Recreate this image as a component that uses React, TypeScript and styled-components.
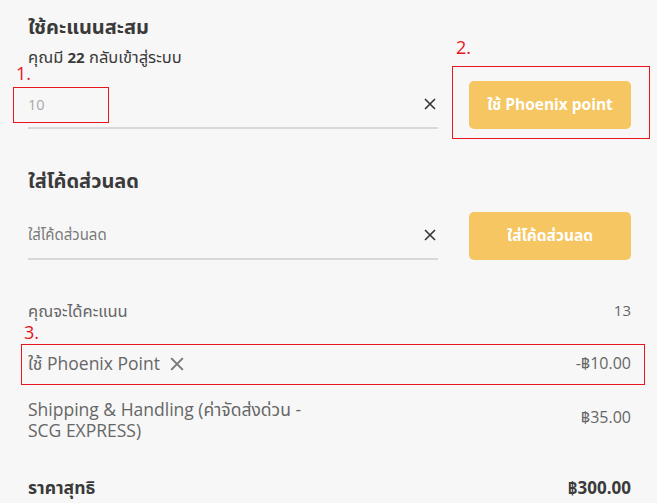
import React from 'react';
import styled, { createGlobalStyle } from 'styled-components';

const GlobalStyle = createGlobalStyle`
    html, body {
        margin: 0;
        padding: 0;
        background: #f7f7f7;
    }
    body {
        font-family: 'Open Sans', 'Noto Sans Thai', 'Noto Sans', 'DejaVu Sans', sans-serif;
        color: #555;
    }
`;

const colors = {
    title: '#3a3a3a',
    body: '#666666',
    muted: '#7a7a7a',
    placeholder: '#a8a8a8',
    line: '#d8d8d8',
    button: '#f5c662',
    mark: '#e8141e',
};

const Page = styled.div`
    position: relative;
    width: 657px;
    height: 503px;
    box-sizing: border-box;
    padding: 15px 26px 0 28px;
    overflow: hidden;
`;

const Section = styled.section<{ $gap?: number }>`
    display: flex;
    flex-direction: column;
    margin-bottom: ${props => props.$gap ?? 0}px;
`;

const SectionTitle = styled.h3`
    margin: 0;
    font-size: 20px;
    line-height: 24px;
    font-weight: 700;
    color: ${colors.title};
`;

const Hint = styled.p`
    margin: 8px 0 0;
    font-size: 16.5px;
    line-height: 20px;
    color: ${colors.title};

    b {
        font-size: 15px;
        font-weight: 700;
    }
`;

const InputRow = styled.div<{ $top: number }>`
    display: flex;
    align-items: flex-end;
    gap: 31px;
    margin-top: ${props => props.$top}px;
`;

const Field = styled.div`
    flex: 1;
    display: flex;
    align-items: center;
    height: 46px;
    border-bottom: 2px solid ${colors.line};
`;

const FieldText = styled.span<{ $size?: number; $color?: string }>`
    flex: 1;
    font-size: ${props => props.$size ?? 14}px;
    color: ${props => props.$color ?? colors.placeholder};
`;

const ClearIcon = styled.svg`
    width: 12px;
    height: 12px;
    margin-right: 2px;
    flex-shrink: 0;
`;

const ActionButton = styled.button`
    width: 162px;
    height: 48px;
    flex-shrink: 0;
    border: none;
    border-radius: 5px;
    background: ${colors.button};
    color: #fff;
    font-family: inherit;
    font-size: 15.5px;
    font-weight: 700;
    cursor: pointer;
`;

const SummaryRow = styled.div<{ $top: number; $bold?: boolean }>`
    display: flex;
    justify-content: space-between;
    align-items: flex-start;
    margin-top: ${props => props.$top}px;
    line-height: 21px;
    font-weight: ${props => (props.$bold ? 700 : 400)};
    color: ${props => (props.$bold ? colors.title : colors.body)};
`;

const Label = styled.span<{ $size: number; $width?: number }>`
    display: inline-flex;
    align-items: center;
    gap: 10px;
    font-size: ${props => props.$size}px;
    max-width: ${props => (props.$width ? `${props.$width}px` : 'none')};
`;

const Value = styled.span<{ $size?: number; $offset?: number }>`
    font-size: ${props => props.$size ?? 16}px;
    padding-top: ${props => props.$offset ?? 0}px;
    white-space: nowrap;
`;

const Mark = styled.div<{ $x: number; $y: number; $w?: number; $h?: number }>`
    position: absolute;
    left: ${props => props.$x}px;
    top: ${props => props.$y}px;
    width: ${props => (props.$w ? `${props.$w}px` : 'auto')};
    height: ${props => (props.$h ? `${props.$h}px` : 'auto')};
    border: ${props => (props.$w ? `1px solid ${colors.mark}` : 'none')};
    color: ${colors.mark};
    font-size: 18px;
    line-height: 20px;
    pointer-events: none;
`;

const Cross = ({ size = 12, color = '#333', stroke = 1.6 }: { size?: number; color?: string; stroke?: number }) => (
    <ClearIcon viewBox="0 0 12 12" style={{ width: size, height: size }}>
        <path d="M1 1 L11 11 M11 1 L1 11" stroke={color} strokeWidth={stroke} fill="none" />
    </ClearIcon>
);

const App = () => {
    return (
        <>
            <GlobalStyle />
            <Page>
                <Section $gap={40}>
                    <SectionTitle>ใช้คะแนนสะสม</SectionTitle>
                    <Hint>
                        คุณมี <b>22</b> กลับเข้าสู่ระบบ
                    </Hint>
                    <InputRow $top={14}>
                        <Field>
                            <FieldText $size={14.5}>10</FieldText>
                            <Cross />
                        </Field>
                        <ActionButton>ใช้ Phoenix point</ActionButton>
                    </InputRow>
                </Section>

                <Section>
                    <SectionTitle>ใส่โค้ดส่วนลด</SectionTitle>
                    <InputRow $top={19}>
                        <Field>
                            <FieldText $size={15} $color={colors.muted}>
                                ใส่โค้ดส่วนลด
                            </FieldText>
                            <Cross />
                        </Field>
                        <ActionButton>ใส่โค้ดส่วนลด</ActionButton>
                    </InputRow>
                </Section>

                <SummaryRow $top={40}>
                    <Label $size={16.5}>คุณจะได้คะแนน</Label>
                    <Value $size={15}>13</Value>
                </SummaryRow>
                <SummaryRow $top={32}>
                    <Label $size={17.5}>
                        ใช้ Phoenix Point
                        <Cross size={14} color="#777" stroke={1.7} />
                    </Label>
                    <Value>-฿10.00</Value>
                </SummaryRow>
                <SummaryRow $top={25}>
                    <Label $size={17.5} $width={292}>
                        Shipping &amp; Handling (ค่าจัดส่งด่วน - SCG EXPRESS)
                    </Label>
                    <Value $offset={8}>฿35.00</Value>
                </SummaryRow>
                <SummaryRow $top={36} $bold>
                    <Label $size={17.5}>ราคาสุทธิ</Label>
                    <Value $size={17}>฿300.00</Value>
                </SummaryRow>

                <Mark $x={16} $y={63}>1.</Mark>
                <Mark $x={13} $y={87} $w={94} $h={34} />
                <Mark $x={456} $y={37}>2.</Mark>
                <Mark $x={452} $y={66} $w={196} $h={71} />
                <Mark $x={24} $y={322}>3.</Mark>
                <Mark $x={21} $y={344} $w={622} $h={39} />
            </Page>
        </>
    );
};

export default App;
